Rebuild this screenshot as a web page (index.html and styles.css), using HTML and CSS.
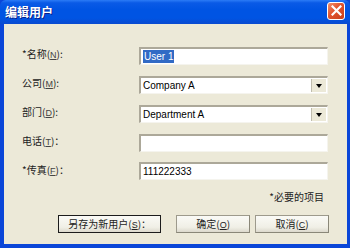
FILE: index.html
```html
<!DOCTYPE html>
<html>
<head>
<meta charset="UTF-8">
<title>编辑用户</title>
<link rel="stylesheet" href="styles.css">
</head>
<body>
<div class="window">
  <div class="titlebar">
    <span class="title">编辑用户</span>
    <span class="close">
      <svg width="11" height="11" viewBox="0 0 11 11"><path d="M1.5 1.5 L9.5 9.5 M9.5 1.5 L1.5 9.5" stroke="#fff" stroke-width="2.2" stroke-linecap="square"/></svg>
    </span>
  </div>
  <div class="client">
    <div class="form">
      <label class="lbl">*名称(<u>N</u>):</label>
      <div class="field"><span class="sel">User 1</span></div>

      <label class="lbl">公司(<u>M</u>):</label>
      <div class="field combo"><span>Company A</span><span class="drop"><i></i></span></div>

      <label class="lbl">部门(<u>D</u>):</label>
      <div class="field combo"><span>Department A</span><span class="drop"><i></i></span></div>

      <label class="lbl">电话(<u>T</u>)：</label>
      <div class="field"></div>

      <label class="lbl">*传真(<u>F</u>)：</label>
      <div class="field"><span>111222333</span></div>
    </div>
    <div class="note">*必要的项目</div>
    <div class="buttons">
      <button class="btn btn-default">另存为新用户(<u>S</u>)：</button>
      <button class="btn ok">确定(<u>O</u>)</button>
      <button class="btn">取消(<u>C</u>)</button>
    </div>
  </div>
</div>
</body>
</html>
```

FILE: styles.css
```css
body {
  margin: 0;
  font-family: "Liberation Sans", "Noto Sans CJK SC", sans-serif;
  font-size: 11px;
  color: #000;
}
.window {
  width: 350px;
  height: 248px;
  display: flex;
  flex-direction: column;
  background: #0a46d8;
}
.titlebar {
  height: 24px;
  display: flex;
  align-items: center;
  justify-content: space-between;
  padding: 0 5px 0 5px;
  background: linear-gradient(to bottom, #2b7bf6 0%, #0a5ae6 12%, #0054e3 40%, #0054e3 75%, #0a4ad0 100%);
  border-radius: 6px 6px 0 0;
}
.title {
  color: #fff;
  font-family: "Noto Sans CJK SC", sans-serif;
  font-weight: bold;
  font-size: 12px;
  text-shadow: 1px 1px 0 #0a1e8a;
  margin-top: -2px;
}
.close {
  width: 16px;
  height: 16px;
  border: 1px solid #fff;
  border-radius: 3px;
  background: linear-gradient(135deg, #f0906e 0%, #e0532e 45%, #c8401c 100%);
  display: flex;
  align-items: center;
  justify-content: center;
  margin-top: -3px;
}
.client {
  flex: 1;
  background: #ece9d8;
  margin: 0 3px 4px 4px;
  padding: 23px 18px 0 18px;
  display: flex;
  flex-direction: column;
}
.form {
  display: grid;
  grid-template-columns: 117px 189px;
  row-gap: 11px;
}
.form .field:last-child { margin-top: -1px; }
.lbl {
  font-family: "Noto Sans CJK SC", sans-serif;
  font-size: 10px;
  line-height: 14px;
  white-space: nowrap;
  color: #222;
}
.lbl u {
  font-family: "Liberation Sans", sans-serif;
  font-size: 9px;
  color: #444;
}
.field {
  height: 18px;
  box-sizing: border-box;
  background: #fff;
  border-top: 2px solid #aca899;
  border-left: 2px solid #aca899;
  border-bottom: 1px solid #f5f4ee;
  border-right: 1px solid #f5f4ee;
  display: flex;
  align-items: center;
  padding-left: 2px;
  font-size: 10px;
}
.sel {
  background: #316ac5;
  color: #fff;
  padding: 0 1px;
  line-height: 13px;
}
.combo {
  justify-content: space-between;
  padding-right: 1px;
}
.drop {
  width: 14px;
  height: 13px;
  background: #ece9d8;
  border-left: 1px solid #c0bdae;
  display: flex;
  align-items: center;
  justify-content: center;
}
.drop i {
  width: 0;
  height: 0;
  border-left: 3px solid transparent;
  border-right: 3px solid transparent;
  border-top: 4px solid #000;
}
.note {
  font-family: "Noto Sans CJK SC", sans-serif;
  font-size: 10px;
  text-align: right;
  margin-top: 9px;
  padding-right: 5px;
  color: #222;
}
.buttons {
  display: flex;
  margin-top: 11px;
  padding-left: 36px;
}
.btn {
  height: 18px;
  padding: 0;
  font-family: "Noto Sans CJK SC", sans-serif;
  font-size: 10px;
  line-height: 14px;
  color: #222;
  background: linear-gradient(to bottom, #fafaf6 0%, #f0efe6 70%, #dcd9cc 100%);
  border: 1px solid #9d9a8c;
  border-right-color: #8a8778;
  border-bottom-color: #8a8778;
  width: 75px;
  margin-left: 5px;
}
.btn u { font-family: "Liberation Sans", sans-serif; font-size: 9px; }
.btn-default {
  width: 105px;
  margin-left: 0;
  border: 1px solid #1c1c1c;
}
.ok { margin-left: 15px; }
```
